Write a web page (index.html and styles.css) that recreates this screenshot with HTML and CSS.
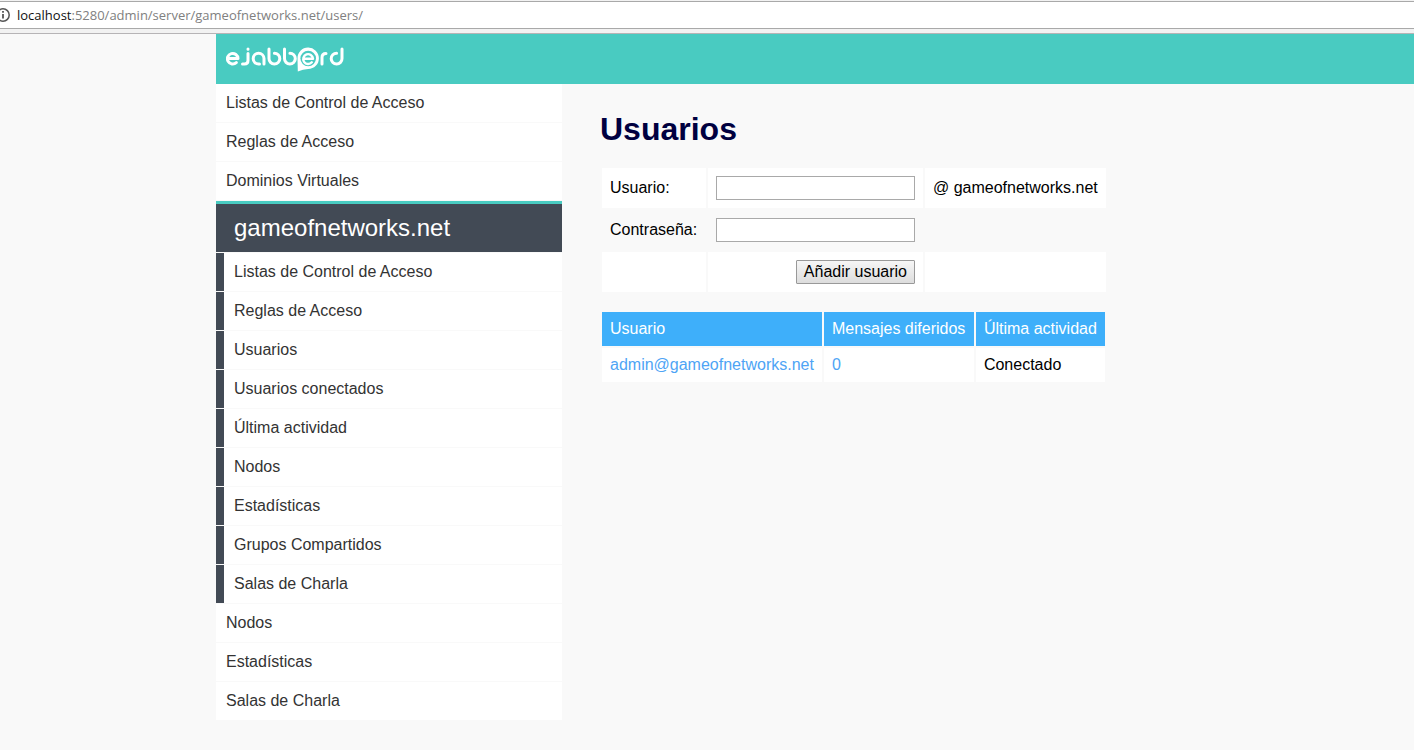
FILE: index.html
```html
<!DOCTYPE html>
<html lang="es">
<head>
<meta charset="utf-8">
<title>ejabberd Web Admin</title>
<link rel="stylesheet" href="styles.css">
</head>
<body>
<div class="toolbar">
  <div class="address">
    <svg class="info" width="12" height="16" viewBox="0 0 12 16" fill="none" stroke="#555" aria-hidden="true"><circle cx="3" cy="8" r="6.2" stroke-width="1.5"/><path d="M3 7v4.500M3 4v1.700" stroke-width="1.800"/></svg>
    <span class="url"><span class="host">localhost</span>:5280/admin/server/gameofnetworks.net/users/</span>
  </div>
</div>
<div class="page">
  <header class="header">
    <a class="logo" href="#" aria-label="ejabberd">
      <svg width="118" height="28" viewBox="0 0 118 28" fill="none" stroke="#fff" stroke-width="3" stroke-linecap="round" stroke-linejoin="round" aria-hidden="true">
        <path d="M2 14.600H12A5.300 5.300 0 1 0 10.300 18.600"/>
        <path d="M22 9.500V16.500Q22 20 18.500 20H16.500M22 5.100V5.300"/>
        <path d="M38 14.500V20M38 14.500A5.400 5.400 0 1 0 32.600 20H33.500"/>
        <path d="M43 5V14.500A5.400 5.400 0 1 0 48.400 9.200"/>
        <path d="M58.500 5V14.500A5.400 5.400 0 1 0 63.900 9.200"/>
        <path d="M71.500 14.500A10.700 10.700 0 1 1 82.200 25Q77 25 71.800 27.500Z" fill="#fff" stroke="none"/>
        <circle cx="82.200" cy="14.500" r="7.800" fill="#49cbc1" stroke="none"/>
        <path d="M77.500 14.700H87A4.900 4.900 0 1 0 85.800 18.300" stroke-width="2.400"/>
        <path d="M96 20V13.500Q96 9.500 100 9.500"/>
        <path d="M116 5V14.500A5.400 5.400 0 1 1 110.600 9.200"/>
      </svg>
    </a>
  </header>
  <div class="columns">
    <nav class="menu">
      <ul>
        <li><a href="#">Listas de Control de Acceso</a></li>
        <li><a href="#">Reglas de Acceso</a></li>
        <li><a href="#">Dominios Virtuales</a></li>
        <li class="domain"><a href="#">gameofnetworks.net</a></li>
        <li class="sub"><a href="#">Listas de Control de Acceso</a></li>
        <li class="sub"><a href="#">Reglas de Acceso</a></li>
        <li class="sub"><a href="#">Usuarios</a></li>
        <li class="sub"><a href="#">Usuarios conectados</a></li>
        <li class="sub"><a href="#">Última actividad</a></li>
        <li class="sub"><a href="#">Nodos</a></li>
        <li class="sub"><a href="#">Estadísticas</a></li>
        <li class="sub"><a href="#">Grupos Compartidos</a></li>
        <li class="sub"><a href="#">Salas de Charla</a></li>
        <li><a href="#">Nodos</a></li>
        <li><a href="#">Estadísticas</a></li>
        <li><a href="#">Salas de Charla</a></li>
      </ul>
    </nav>
    <main class="content">
      <h1>Usuarios</h1>
      <form>
        <table class="form-table">
          <tr><td class="label"><label for="user">Usuario:</label></td><td><input id="user" type="text"></td><td>@ gameofnetworks.net</td></tr>
          <tr><td class="label"><label for="pass">Contraseña:</label></td><td><input id="pass" type="password"></td><td></td></tr>
          <tr><td></td><td class="action"><button type="button">Añadir usuario</button></td><td></td></tr>
        </table>
      </form>
      <table class="users">
        <thead><tr><th>Usuario</th><th class="messages">Mensajes diferidos</th><th>Última actividad</th></tr></thead>
        <tbody><tr><td><a href="#">admin@gameofnetworks.net</a></td><td><a href="#">0</a></td><td>Conectado</td></tr></tbody>
      </table>
    </main>
  </div>
</div>
</body>
</html>
```
FILE: styles.css
```css
* { box-sizing: border-box; }
body {
  margin: 0;
  background: #f9f9f9;
  color: #000;
  font: 16px/18px "Liberation Sans", Arial, sans-serif;
}
a { text-decoration: none; }

.toolbar {
  padding: 1px 0 4px;
  background: #f2f2f2;
  border-bottom: 1px solid #b6b4b6;
}
.address {
  display: flex;
  align-items: center;
  gap: 5px;
  height: 28px;
  background: #fff;
  border: solid #a9a9a9;
  border-width: 1px 0;
}
.url {
  color: #808080;
  font: 13px/18px "Open Sans", "Noto Sans", sans-serif;
}
.host { color: #111; }

.page { margin-left: 216px; }
.header {
  height: 50px;
  padding: 10px;
  background: #49cbc1;
}
.logo { display: inline-block; }
.logo svg { display: block; }
.columns { display: flex; align-items: flex-start; }

.menu { flex: 0 0 346px; }
.menu ul { margin: 0; padding: 0; list-style: none; }
.menu li { background: #fff; border-bottom: 1px solid #f9f9f9; }
.menu a { display: block; padding: 10px; color: #333; }
.menu .sub a { border-left: 8px solid #424a55; }
.menu .domain { border-top: 3px solid #49cbc1; }
.menu .domain a {
  padding: 10px 18px;
  background: #424a55;
  color: #fff;
  font-size: 24px;
  line-height: 28px;
}

.content { flex: 1; padding: 26px 20px 20px 38px; }
h1 { margin: 0 0 18px; color: #000040; font-size: 32px; line-height: 38px; }
table { border-spacing: 2px; }
td, th { padding: 8px; font-weight: normal; text-align: left; }
tr:nth-child(odd) td { background: #fff; }
.form-table td { height: 40px; }
.form-table .label { min-width: 104px; }
.form-table input {
  display: block;
  width: 199px;
  height: 24px;
  padding: 1px 3px;
  border: 1px solid #a9a9a9;
  border-radius: 0;
  background: #fff;
  font: inherit;
}
.form-table .action { text-align: right; }
button {
  display: block;
  height: 24px;
  margin-left: auto;
  padding: 0 7px;
  border: 1px solid #999;
  border-radius: 1px;
  background: linear-gradient(#f6f6f6, #ddd);
  color: #000;
  font: inherit;
}
.users { margin-top: 16px; }
.users th { background: #3eaffa; color: #fff; }
.users .messages { min-width: 150px; }
.users a { color: #4ea4f5; }
```
